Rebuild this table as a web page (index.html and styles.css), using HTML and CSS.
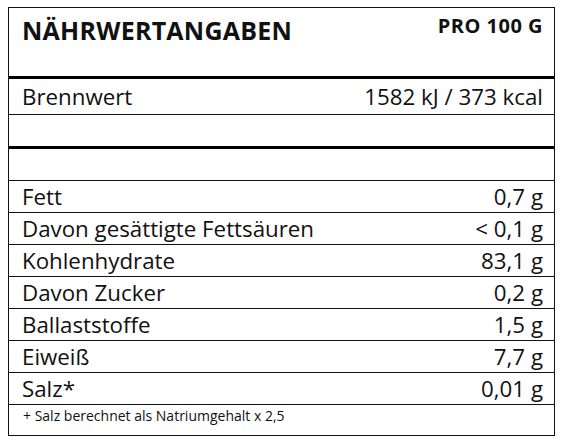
FILE: index.html
```html
<!DOCTYPE html>
<html lang="de">
<head>
<meta charset="utf-8">
<link rel="stylesheet" href="styles.css">
</head>
<body>
<div class="panel">
  <div class="head">
    <div class="title">NÄHRWERTANGABEN</div>
    <div class="per">PRO 100 G</div>
  </div>
  <div class="row thin first"><span>Brennwert</span><span>1582 kJ / 373 kcal</span></div>
  <div class="row empty thick"></div>
  <div class="row empty thin"></div>
  <div class="row thin"><span>Fett</span><span>0,7 g</span></div>
  <div class="row thin"><span>Davon gesättigte Fettsäuren</span><span>&lt; 0,1 g</span></div>
  <div class="row thin"><span>Kohlenhydrate</span><span>83,1 g</span></div>
  <div class="row thin"><span>Davon Zucker</span><span>0,2 g</span></div>
  <div class="row thin"><span>Ballaststoffe</span><span>1,5 g</span></div>
  <div class="row thin"><span>Eiweiß</span><span>7,7 g</span></div>
  <div class="row thin"><span>Salz*</span><span>0,01 g</span></div>
  <div class="note">+ Salz berechnet als Natriumgehalt x 2,5</div>
</div>
</body>
</html>
```
FILE: styles.css
```css
html, body {
  margin: 0;
  padding: 0;
  background: #fff;
}
body {
  padding: 7px 0 0 8px;
  font-family: "Open Sans", "Noto Sans", sans-serif;
  color: #111;
}
.panel {
  width: 545px;
  border: 1px solid #111;
}
.head {
  height: 68px;
  display: flex;
  justify-content: space-between;
  align-items: flex-start;
  padding: 0 11px 0 13px;
  border-bottom: 3px solid #000;
}
.title {
  font-weight: 700;
  font-size: 25px;
  letter-spacing: 0.25px;
  line-height: 28px;
  margin-top: 8px;
}
.per {
  font-weight: 700;
  font-size: 20px;
  letter-spacing: 0.5px;
  line-height: 22px;
  margin-top: 7px;
}
.row {
  height: 31px;
  display: flex;
  justify-content: space-between;
  align-items: center;
  padding: 0 11px 0 13px;
  font-size: 22.3px;
  line-height: 31px;
}
.row.first {
  height: 35px;
  line-height: 35px;
}
.row.thin {
  border-bottom: 1px solid #111;
}
.row.thick {
  border-bottom: 3px solid #000;
}
.note {
  height: 30px;
  padding: 0 0 0 14px;
  font-size: 14px;
  line-height: 22px;
}
```
